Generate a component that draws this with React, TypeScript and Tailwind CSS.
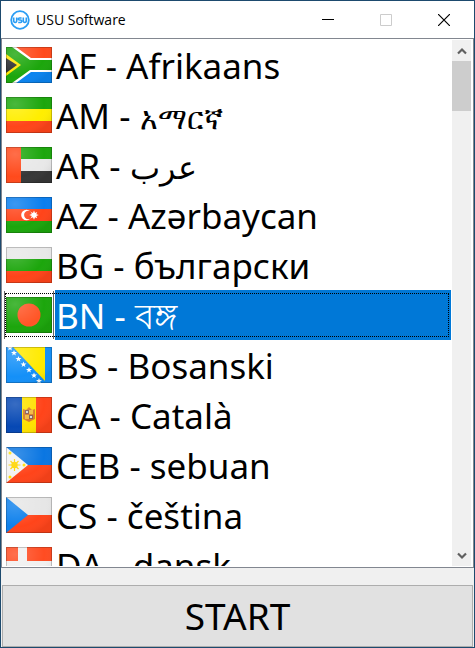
import { useState } from "react";
import type { ReactNode } from "react";

type Language = {
  code: string;
  name: string;
  lang: string;
  nameClass?: string;
  flag: ReactNode;
};

const star = (x: number, y: number) => (
  <path
    key={x}
    transform={`translate(${x} ${y})`}
    d="M0-3 .8-1 3-1 1.2.4 1.9 2.6 0 1.3-1.9 2.6-1.2.4-3-1-.8-1Z"
    fill="#fff"
  />
);

const languages: Language[] = [
  {
    code: "AF",
    name: "Afrikaans",
    lang: "af",
    flag: (
      <>
        <path d="M0 0h46v12H23Z" fill="#ff4a1c" />
        <path d="M0 36h46V24H23Z" fill="#0a84f0" />
        <path d="M6-3 25 11H46V25H25L6 39H-4V-3Z" fill="#fff" />
        <path d="M-1 0H6L24 13H46V23H24L6 36H-1Z" fill="#1ca60c" />
        <path d="M0 7 15 18 0 29Z" fill="#ffe600" />
        <path d="M0 11 11 18 0 26Z" fill="#2a2c30" />
      </>
    ),
  },
  {
    code: "AM",
    name: "አማርኛ",
    lang: "am",
    nameClass: "text-[30px]",
    flag: (
      <>
        <path d="M0 0h46v12H0Z" fill="#1ca60c" />
        <path d="M0 12h46v12H0Z" fill="#ffee00" />
        <path d="M0 24h46v12H0Z" fill="#ff441a" />
      </>
    ),
  },
  {
    code: "AR",
    name: "عرب",
    lang: "ar",
    nameClass: "text-[32px]",
    flag: (
      <>
        <path d="M0 0h46v12H0Z" fill="#1ca60c" />
        <path d="M0 12h46v12H0Z" fill="#e8e8e8" />
        <path d="M0 24h46v12H0Z" fill="#373737" />
        <path d="M0 0h15v36H0Z" fill="#ff4a1c" />
      </>
    ),
  },
  {
    code: "AZ",
    name: "Azərbaycan",
    lang: "az",
    flag: (
      <>
        <path d="M0 0h46v12H0Z" fill="#0a7eee" />
        <path d="M0 12h46v12H0Z" fill="#ff441a" />
        <path d="M0 24h46v12H0Z" fill="#1ca60c" />
        <circle cx="20.5" cy="18" r="5.3" fill="#fff" />
        <circle cx="22.3" cy="18" r="4.2" fill="#ff4c24" />
        <path
          d="M28 13.5 29 16 31.2 15 30.3 17.2 32.8 18 30.3 19 31.2 21.2 29 20.3 28 22.8 27 20.3 24.8 21.2 25.8 19 23.3 18 25.8 17 24.8 15 27 16Z"
          fill="#fff"
        />
      </>
    ),
  },
  {
    code: "BG",
    name: "български",
    lang: "bg",
    flag: (
      <>
        <path d="M0 0h46v12H0Z" fill="#e8e8e8" />
        <path d="M0 12h46v12H0Z" fill="#1ca60c" />
        <path d="M0 24h46v12H0Z" fill="#ff441a" />
      </>
    ),
  },
  {
    code: "BN",
    name: "বঙ্গ",
    lang: "bn",
    flag: (
      <>
        <path d="M0 0h46v36H0Z" fill="#1ca60c" />
        <circle cx="23" cy="18" r="11.5" fill="#ff5526" />
      </>
    ),
  },
  {
    code: "BS",
    name: "Bosanski",
    lang: "bs",
    flag: (
      <>
        <path d="M0 0h46v36H0Z" fill="#1490f8" />
        <path d="M7 0H39V34Z" fill="#ffea00" />
        {star(4, 1)}
        {star(8, 6)}
        {star(12.5, 12)}
        {star(17.5, 17.5)}
        {star(23, 23)}
        {star(28, 28.5)}
        {star(33, 34)}
      </>
    ),
  },
  {
    code: "CA",
    name: "Català",
    lang: "ca",
    flag: (
      <>
        <path d="M0 0h16v36H0Z" fill="#0648b4" />
        <path d="M16 0h14v36H16Z" fill="#ffe200" />
        <path d="M30 0h16v36H30Z" fill="#ff441a" />
        <path
          d="M17 12 20 13 23 10 26 13 29 12V22L27 23 23 25 19 23 17 22Z"
          fill="#d87a28"
        />
        <path d="M19 13h4v4h-4ZM23 18h4v4h-4Z" fill="#8c5a50" />
        <path d="M23 13h4v4h-4ZM19 18h4v4h-4Z" fill="#f2b83c" />
        <path d="M20 14h2v2h-2ZM24 19h2v2h-2Z" fill="#d8d8d0" />
      </>
    ),
  },
  {
    code: "CEB",
    name: "sebuan",
    lang: "ceb",
    flag: (
      <>
        <path d="M0 0h46v18H0Z" fill="#0a76e2" />
        <path d="M0 18h46v18H0Z" fill="#ff441a" />
        <path d="M0 0 22 18 0 36Z" fill="#f2f2f2" />
        <circle cx="8.5" cy="18" r="3.2" fill="#ffd500" />
        <path
          d="M8.5 12V24M2.5 18H14.5M4.5 14 12.5 22M12.5 14 4.5 22"
          stroke="#ffd500"
          strokeWidth="1.2"
        />
        <circle cx="4" cy="6" r="1.5" fill="#ffe000" />
        <circle cx="4" cy="30" r="1.5" fill="#ffe000" />
        <circle cx="18" cy="18" r="1.5" fill="#ffe000" />
      </>
    ),
  },
  {
    code: "CS",
    name: "čeština",
    lang: "cs",
    flag: (
      <>
        <path d="M0 0h46v18H0Z" fill="#e6e6e6" />
        <path d="M0 18h46v18H0Z" fill="#ff441a" />
        <path d="M0 0 22 18 0 36Z" fill="#0d80ec" />
      </>
    ),
  },
  {
    code: "DA",
    name: "dansk",
    lang: "da",
    flag: (
      <>
        <path d="M0 0h46v36H0Z" fill="#ff4c22" />
        <path d="M12 0h9v36H12ZM0 14h46v9H0Z" fill="#f0f0f0" />
      </>
    ),
  },
];

function Flag({ children }: { children: ReactNode }) {
  return (
    <svg viewBox="0 0 46 36" className="block h-9 w-[46px]" aria-hidden="true">
      <defs>
        <radialGradient id="gloss" cx="0.2" cy="0.2" r="0.9">
          <stop offset="0" stopColor="#fff" stopOpacity="0.2" />
          <stop offset="0.7" stopColor="#fff" stopOpacity="0" />
          <stop offset="1" stopColor="#000" stopOpacity="0.06" />
        </radialGradient>
      </defs>
      {children}
      <path d="M0 0h46v36H0Z" fill="url(#gloss)" />
      <path
        d="M.5 .5h45v35H.5Z"
        fill="none"
        stroke="#000"
        strokeOpacity="0.2"
      />
    </svg>
  );
}

function TitleBar() {
  return (
    <header className="flex h-[37px] shrink-0 items-center bg-white pl-[9px] pr-px">
      <svg viewBox="0 0 20 20" className="mr-1.5 size-5" aria-hidden="true">
        <circle
          cx="10"
          cy="10"
          r="8.8"
          fill="#fff"
          stroke="#2a9df4"
          strokeWidth="1.8"
        />
        <path
          d="M3.7 7.5V10.5Q3.7 12.5 5.2 12.5T6.7 10.5V7.5M11.6 8H9.5Q8.3 8 8.3 9T9.5 10H10.5Q11.7 10 11.7 11.2T10.5 12.5H8.2M13.3 7.5V10.5Q13.3 12.5 14.8 12.5T16.3 10.5V7.5"
          fill="none"
          stroke="#2a9df4"
          strokeWidth="1.6"
        />
      </svg>
      <h1 className="grow font-['Open_Sans',sans-serif] text-[14px] leading-5">
        USU Software
      </h1>
      {/* window controls */}
      <div className="flex h-full">
        <button aria-label="Minimize" className="w-[58px] px-[23px]">
          <svg viewBox="0 0 12 12" className="size-3">
            <path d="M0 5.5H12" stroke="#000" />
          </svg>
        </button>
        <button aria-label="Maximize" disabled className="w-[58px] px-[23px]">
          <svg viewBox="0 0 12 12" className="size-3">
            <path d="M.5 .5h11v11H.5Z" fill="none" stroke="#ccc" />
          </svg>
        </button>
        <button aria-label="Close" className="w-[58px] px-[23px]">
          <svg viewBox="0 0 12 12" className="size-3">
            <path d="M0 0 12 12M12 0 0 12" stroke="#000" strokeWidth="1.2" />
          </svg>
        </button>
      </div>
    </header>
  );
}

function LanguageRow({
  language,
  selected,
  onSelect,
}: {
  language: Language;
  selected: boolean;
  onSelect: () => void;
}) {
  return (
    <li>
      <button
        onClick={onSelect}
        aria-pressed={selected}
        className="relative flex h-[50px] w-full items-stretch pl-[2px] text-left"
      >
        <span
          className={
            selected
              ? "my-px flex items-center border-x border-[#666] px-px"
              : "my-px flex items-center border-x border-transparent px-px"
          }
        >
          <Flag>{language.flag}</Flag>
        </span>
        <span
          className={
            selected
              ? "ml-px grow whitespace-nowrap bg-[#0078d7] pl-px leading-[52px] text-white"
              : "ml-px grow whitespace-nowrap pl-px leading-[52px]"
          }
        >
          {language.code} -{" "}
          <bdi lang={language.lang} className={language.nameClass}>
            {language.name}
          </bdi>
        </span>
        {selected && (
          <span className="absolute inset-y-[3px] left-[3px] right-[2px] border border-dotted border-black" />
        )}
      </button>
    </li>
  );
}

function ScrollBar() {
  return (
    <div className="flex w-[19px] shrink-0 flex-col bg-[#f0f0f0]">
      <button aria-label="Scroll up" className="grid h-[21px] place-items-center">
        <svg viewBox="0 0 10 8" className="h-2 w-2.5">
          <path d="M1 6.5 5 2.5 9 6.5" fill="none" stroke="#606060" strokeWidth="2.2" />
        </svg>
      </button>
      <div className="grow">
        <div className="h-[50px] bg-[#cdcdcd]" />
      </div>
      <button aria-label="Scroll down" className="grid h-[21px] place-items-center">
        <svg viewBox="0 0 10 8" className="h-2 w-2.5">
          <path d="M1 1.5 5 5.5 9 1.5" fill="none" stroke="#606060" strokeWidth="2.2" />
        </svg>
      </button>
    </div>
  );
}

export default function App() {
  const [selected, setSelected] = useState("BN");

  return (
    <div className="flex h-screen flex-col border border-[#1d4a6e] bg-[#f0f0f0] font-['Noto_Sans',sans-serif] text-[35px] text-black">
      <TitleBar />
      <main className="flex min-h-0 grow flex-col">
        {/* language list */}
        <div className="flex min-h-0 grow border border-[#828790] bg-white py-px pr-[2px]">
          <ul aria-label="Language" className="grow overflow-hidden pr-px">
            {languages.map((language) => (
              <LanguageRow
                key={language.code}
                language={language}
                selected={language.code === selected}
                onSelect={() => setSelected(language.code)}
              />
            ))}
          </ul>
          <ScrollBar />
        </div>
        {/* actions */}
        <div className="px-px pt-[17px]">
          <button className="h-[62px] w-full border border-[#adadad] bg-[#e1e1e1] text-[37px] leading-[60px]">
            START
          </button>
        </div>
      </main>
    </div>
  );
}
